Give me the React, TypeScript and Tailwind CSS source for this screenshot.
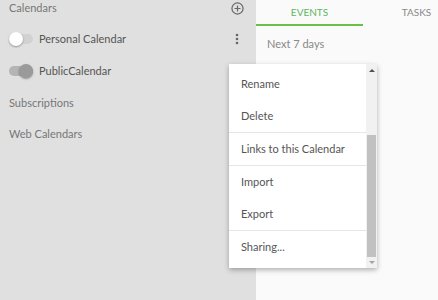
import React from "react";

function Toggle({ on }: { on: boolean }) {
  return (
    <div className="relative w-[24px] h-[14px] flex items-center">
      <div className={`w-[24px] h-[10px] rounded-full ${on ? "bg-[#b4b4b4]" : "bg-[#d2d2d2]"}`} />
      <div
        className={`absolute top-0 w-[14px] h-[14px] rounded-full shadow-[0_1px_2px_rgba(0,0,0,0.35)] ${
          on ? "left-[10px] bg-[#9a9a9a]" : "left-0 bg-white"
        }`}
      />
    </div>
  );
}

function Item({ label }: { label: string }) {
  return <div className="h-[32px] flex items-center pl-[12px] text-[#555]">{label}</div>;
}

export default function App() {
  return (
    <div
      className="relative w-[438px] h-[300px] flex overflow-hidden text-[11px]"
      style={{ fontFamily: "Lato, 'Open Sans', sans-serif" }}
    >
      <div className="w-[256px] shrink-0 h-full bg-[#e0e0e0] flex flex-col">
        <div className="h-[17px] mt-0 flex items-center justify-between pl-[9px] pr-[12px] text-[#777]">
          <span>Calendars</span>
          <svg width="13" height="13" viewBox="0 0 14 14" className="text-[#666]">
            <circle cx="7" cy="7" r="6" fill="none" stroke="currentColor" strokeWidth="1.3" />
            <path d="M7 3.8v6.4M3.8 7h6.4" stroke="currentColor" strokeWidth="1.3" />
          </svg>
        </div>
        <div className="h-[32px] mt-[6px] flex items-center pl-[9px] pr-[17px] text-[#555]">
          <Toggle on={false} />
          <span className="ml-[6px] flex-1">Personal Calendar</span>
          <svg width="4" height="12" viewBox="0 0 4 12">
            <circle cx="2" cy="2" r="1.3" fill="#666" />
            <circle cx="2" cy="6" r="1.3" fill="#666" />
            <circle cx="2" cy="10" r="1.3" fill="#666" />
          </svg>
        </div>
        <div className="h-[32px] flex items-center pl-[9px] text-[#555]">
          <Toggle on={true} />
          <span className="ml-[6px]">PublicCalendar</span>
        </div>
        <div className="h-[32px] flex items-center pl-[9px] text-[#777]">Subscriptions</div>
        <div className="h-[30px] flex items-center pl-[9px] text-[#777]">Web Calendars</div>
      </div>
      <div className="flex-1 min-w-0 h-full bg-[#fafafa] flex flex-col overflow-hidden">
        <div className="h-[26px] flex">
          <div className="w-[107px] shrink-0 flex items-center justify-center text-[#5cb85c] border-b-2 border-[#6abf4b] text-[10px] pt-[1px]">
            EVENTS
          </div>
          <div className="w-[107px] shrink-0 flex items-center justify-center text-[#888] text-[10px] pb-[1px]">TASKS</div>
        </div>
        <div className="pl-[11px] pt-[10px] text-[#888]">Next 7 days</div>
      </div>

      <div className="absolute left-[229px] top-[64px] w-[148px] h-[204px] bg-white shadow-[0_2px_5px_rgba(0,0,0,0.3)] flex">
        <div className="flex-1 pt-[4px] flex flex-col">
          <Item label="Rename" />
          <Item label="Delete" />
          <div className="h-px bg-[#e6e6e6]" />
          <Item label="Links to this Calendar" />
          <div className="h-px bg-[#e6e6e6]" />
          <Item label="Import" />
          <Item label="Export" />
          <div className="h-px bg-[#e6e6e6]" />
          <Item label="Sharing..." />
        </div>
        <div className="w-[11px] bg-[#f1f1f1] flex flex-col items-center">
          <div className="h-[12px] flex items-center justify-center">
            <div className="w-0 h-0 border-l-[3px] border-r-[3px] border-b-[3px] border-l-transparent border-r-transparent border-b-[#505050]" />
          </div>
          <div className="h-[59px]" />
          <div className="w-[9px] h-[122px] bg-[#c1c1c1]" />
          <div className="flex-1 flex items-center justify-center">
            <div className="w-0 h-0 border-l-[3px] border-r-[3px] border-t-[3px] border-l-transparent border-r-transparent border-t-[#a3a3a3]" />
          </div>
        </div>
      </div>
    </div>
  );
}
